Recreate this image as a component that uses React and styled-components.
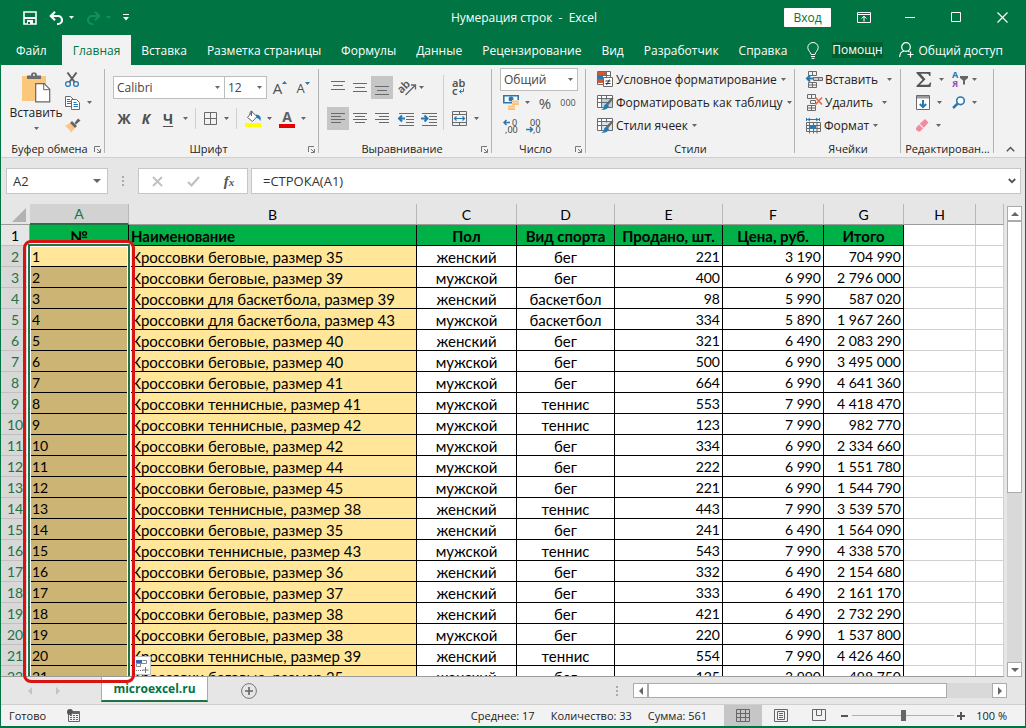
import styled, { createGlobalStyle, css } from "styled-components";

const tabs = [
  "Вставка",
  "Разметка страницы",
  "Формулы",
  "Данные",
  "Рецензирование",
  "Вид",
  "Разработчик",
  "Справка",
];

const columns = [
  { name: "A", width: 99, title: "№" },
  { name: "B", width: 288, title: "Наименование" },
  { name: "C", width: 100, title: "Пол" },
  { name: "D", width: 98, title: "Вид спорта" },
  { name: "E", width: 108, title: "Продано, шт." },
  { name: "F", width: 101, title: "Цена, руб." },
  { name: "G", width: 80, title: "Итого" },
];

const rows = [
  ["Кроссовки беговые, размер 35", "женский", "бег", "221", "3 190", "704 990"],
  ["Кроссовки беговые, размер 39", "мужской", "бег", "400", "6 990", "2 796 000"],
  ["Кроссовки для баскетбола, размер 39", "женский", "баскетбол", "98", "5 990", "587 020"],
  ["Кроссовки для баскетбола, размер 43", "мужской", "баскетбол", "334", "5 890", "1 967 260"],
  ["Кроссовки беговые, размер 40", "женский", "бег", "321", "6 490", "2 083 290"],
  ["Кроссовки беговые, размер 40", "мужской", "бег", "500", "6 990", "3 495 000"],
  ["Кроссовки беговые, размер 41", "мужской", "бег", "664", "6 990", "4 641 360"],
  ["Кроссовки теннисные, размер 41", "мужской", "теннис", "553", "7 990", "4 418 470"],
  ["Кроссовки теннисные, размер 42", "мужской", "теннис", "123", "7 990", "982 770"],
  ["Кроссовки беговые, размер 42", "мужской", "бег", "334", "6 990", "2 334 660"],
  ["Кроссовки беговые, размер 44", "мужской", "бег", "222", "6 990", "1 551 780"],
  ["Кроссовки беговые, размер 45", "мужской", "бег", "221", "6 990", "1 544 790"],
  ["Кроссовки теннисные, размер 38", "женский", "теннис", "443", "7 990", "3 539 570"],
  ["Кроссовки беговые, размер 35", "женский", "бег", "241", "6 490", "1 564 090"],
  ["Кроссовки теннисные, размер 43", "мужской", "теннис", "543", "7 990", "4 338 570"],
  ["Кроссовки беговые, размер 36", "женский", "бег", "332", "6 490", "2 154 680"],
  ["Кроссовки беговые, размер 37", "женский", "бег", "333", "6 490", "2 161 170"],
  ["Кроссовки беговые, размер 38", "женский", "бег", "421", "6 490", "2 732 290"],
  ["Кроссовки беговые, размер 38", "мужской", "бег", "220", "6 990", "1 537 800"],
  ["Кроссовки теннисные, размер 39", "женский", "теннис", "554", "7 990", "4 426 460"],
  ["Кроссовки беговые, размер 35", "женский", "бег", "125", "3 990", "498 750"],
];

const GREY = "#6a6a6a";
const BLUE = "#2878b0";

function Svg({ w = 16, h = 16, children }) {
  return (
    <svg width={w} height={h} viewBox={`0 0 ${w} ${h}`} fill="none" aria-hidden="true">
      {children}
    </svg>
  );
}

function Lines({ rows: list, color = GREY }) {
  return list.map(([x, y, w]) => <path key={y} d={`M${x} ${y}.5h${w}`} stroke={color} />);
}

const Caret = ({ color = "#666" }) => (
  <Svg w={5} h={3}>
    <path d="M0 0h5L2.5 3z" fill={color} />
  </Svg>
);

const SaveIcon = () => (
  <Svg w={14} h={14}>
    <path d="M1 1h12v12H1z" stroke="#fff" strokeWidth="1.6" />
    <path d="M1 7h12" stroke="#fff" strokeWidth="2" />
    <path d="M4 9h6v4H4z" fill="#fff" />
    <path d="M5 11h2v2H5z" fill="#007442" />
  </Svg>
);

const UndoIcon = ({ color = "#fff", flip }) => (
  <Svg w={15} h={14}>
    <g transform={flip ? "matrix(-1 0 0 1 15 0)" : undefined} stroke={color}>
      <path d="M2 5h7a4 4 0 0 1 0 8h-1" strokeWidth="2.2" />
      <path d="M6 0.8L1.8 5L6 9.2" strokeWidth="2.2" />
    </g>
  </Svg>
);

const CustomizeIcon = () => (
  <Svg w={6} h={7}>
    <path d="M0 .5h6" stroke="#fff" />
    <path d="M0 3h6L3 6.5z" fill="#fff" />
  </Svg>
);

const RibbonIcon = () => (
  <Svg w={14} h={11}>
    <path d="M.5.5h13v10H.5zM.5 2.5h13" stroke="#fff" />
    <path d="M7 9.5V4.5M4.5 6.5L7 4.2L9.5 6.5" stroke="#fff" />
  </Svg>
);

const BulbIcon = () => (
  <Svg w={12} h={17}>
    <path d="M4 12.5C4 10 .8 9 .8 5.5A5.2 5 0 0 1 11.2 5.5C11.2 9 8 10 8 12.5zM4 14.5h4M4.5 16.4h3" stroke="#fff" />
  </Svg>
);

const PersonIcon = () => (
  <Svg w={15} h={16}>
    <circle cx="7" cy="5" r="4.3" stroke="#fff" strokeWidth="1.2" />
    <path d="M.7 15C.7 11 3 9.5 5 9M9 9L10.5 9.8M11.5 9.5v6M8.5 12.5h6" stroke="#fff" strokeWidth="1.2" />
  </Svg>
);

const PasteIcon = () => (
  <Svg w={30} h={31}>
    <path d="M1 4h24v25H1z" fill="#fbc77b" />
    <path d="M6 7V3.5h4C10 1 11 .5 13 .5s3 .5 3 3h4V7z" fill="#6d6d6d" />
    <circle cx="13" cy="3" r="1" fill="#f2f2f2" />
    <path d="M14.7 11.7h8.5l5.5 5.5v12.6h-14z" fill="#fff" stroke="#666" strokeWidth="1.2" />
    <path d="M22.7 11.7v6h6" stroke="#666" />
  </Svg>
);

const CutIcon = () => (
  <Svg w={14} h={16}>
    <path d="M2.5 0.5L9.5 10M11.5 .5L4.5 10" stroke="#5c5c5c" strokeWidth="2" />
    <circle cx="3" cy="12" r="2.4" stroke={BLUE} strokeWidth="1.3" />
    <circle cx="11" cy="12" r="2.4" stroke={BLUE} strokeWidth="1.3" />
  </Svg>
);

const CopyIcon = () => (
  <Svg w={16} h={14}>
    <path d="M.5.5h5l2.5 2.5v7.5H.5z" fill="#fff" stroke={GREY} />
    <path d="M2 3.5h3M2 5.5h4M2 7.5h4" stroke={BLUE} />
    <path d="M6.5 3.5h5l3 3v7h-8z" fill="#fff" stroke={GREY} />
    <path d="M8.5 6.5h3M8.5 8.5h4.5M8.5 10.5h4.5" stroke={BLUE} />
  </Svg>
);

const BrushIcon = () => (
  <Svg w={16} h={15}>
    <path d="M0 8L5 5L10 10L6 14.5Q4 10.5 0 8z" fill="#fbc68b" />
    <path d="M5 5L7 3L12 8L10 10zM9.5 5L13 .5L15.5 2.5L11 6.5z" fill="#666" />
  </Svg>
);

const BorderIcon = () => (
  <Svg w={13} h={13}>
    <path d="M.5.5h12v12H.5zM6.5.5v12M.5 6.5h12" stroke={GREY} />
  </Svg>
);

const FillIcon = () => (
  <Svg w={17} h={17}>
    <path d="M6.5 2.5L2.5 7.5L7.5 11.5L12 6.5L6.5 1.5V6" stroke="#666" fill="#fff" />
    <path d="M5 5V2.2Q6 0 8 2.2" stroke="#666" />
    <path d="M11 4.5Q17 5 15.5 11Q14 8 11.5 8z" fill={BLUE} />
    <path d="M0 13h16v4H0z" fill="#ffff00" />
  </Svg>
);

const OrientIcon = () => (
  <Svg w={17} h={16}>
    <text x="-1" y="10" transform="rotate(-45 5 9)" fill="#555" fontSize="11" fontWeight="600" fontFamily="Noto Sans">
      ab
    </text>
    <path d="M5.5 15L15 5.5M11 5h4.5v4.5" stroke="#666" strokeWidth="1.3" />
  </Svg>
);

const WrapIcon = () => (
  <Svg w={14} h={17}>
    <text x="0" y="8" fill="#555" fontSize="11" fontWeight="600" fontFamily="Noto Sans">
      ab
    </text>
    <text x="0" y="16" fill="#555" fontSize="11" fontWeight="600" fontFamily="Noto Sans">
      c
    </text>
    <path d="M11.5 9.5v3H7.5M9.5 10.5l-2 2l2 2" stroke={BLUE} />
  </Svg>
);

const MergeIcon = () => (
  <Svg w={15} h={15}>
    <path d="M.5.5h14v14H.5zM.5 3.5h14M.5 11.5h14M7.5.5v3M7.5 11.5v3" stroke={GREY} />
    <path d="M2.5 7.5h10M4.5 5.5l-2 2l2 2M10.5 5.5l2 2l-2 2" stroke={BLUE} strokeWidth="1.2" />
  </Svg>
);

const IndentIcon = ({ right }) => (
  <Svg w={16} h={14}>
    <Lines rows={[[1, 1, 15], [8, 4, 8], [8, 7, 8], [8, 10, 8], [1, 13, 15]]} />
    <path d={right ? "M0 6.5h6M3.5 3.5l3 3l-3 3" : "M1 6.5h6M4 3.5l-3 3l3 3"} stroke={BLUE} strokeWidth="2" />
  </Svg>
);

const MoneyIcon = () => (
  <Svg w={17} h={17}>
    <path d="M.8 1.8h14.4v7H.8z" stroke={BLUE} strokeWidth="1.6" fill="#fff" />
    <circle cx="8" cy="5" r="2.5" fill={BLUE} />
    <path d="M9 6h8v10H4v-4h5z" fill="#f2f2f2" />
    <path d="M9 7.5h7M9 10h7M5 12.5h7M5 15h7" stroke="#fbc27e" strokeWidth="2" />
  </Svg>
);

const DecimalIcon = ({ less }) => (
  <Svg w={16} h={16}>
    <text x={less ? 4 : 9} y="8" fill="#444" fontSize="9" fontFamily="Noto Sans">
      {less ? "00" : "0"}
    </text>
    <text x={less ? 7 : 2} y="15" fill="#444" fontSize="9" fontFamily="Noto Sans">
      {less ? ",0" : ",00"}
    </text>
    <path d={less ? "M0 11.5h6M4 9l2.5 2.5L4 14" : "M1 4.5h6M3.5 2L1 4.5L3.5 7"} stroke={BLUE} strokeWidth="1.5" />
  </Svg>
);

const CondIcon = () => (
  <Svg w={17} h={17}>
    <path d="M.5.5h13v13H.5z" fill="#fff" stroke={GREY} />
    <path d="M1 1h8v3.5H1zM1 8h5v4H1z" fill="#d0593b" />
    <path d="M1 4.5h5V8H1z" fill={BLUE} />
    <path d="M9.5.5v6M.5 4.5h13" stroke={GREY} />
    <path d="M6.5 6.5h9v9h-9z" fill="#fff" stroke={GREY} />
    <path d="M8.5 10h5M8.5 12.5h5M12.5 8.5l-3 5.5" stroke="#333" />
  </Svg>
);

const StyleIcon = ({ filled }) => (
  <Svg w={17} h={17}>
    <path d="M.5 1.5h15v12H.5z" fill="#fff" stroke={GREY} />
    <path d="M4 5h11v8H4z" fill={filled ? "#b9d3e6" : "#d8e4ec"} />
    <path d="M.5 4.5h15M.5 8.5h10M4.5 1.5v12M9.5 1.5v4" stroke={GREY} />
    <path d="M15.5 3L16.5 4.5L11 11.5L9 9.5z" fill="#666" />
    <path d="M9.5 9.5L12 12Q11 16 4 16Q8 14 7 11.5z" fill={BLUE} />
  </Svg>
);

const InsertIcon = () => (
  <Svg w={17} h={17}>
    <path d="M2.5.5h8v4h-8zM6.5.5v4M2.5 11.5h8v5h-8zM6.5 11.5v5M2.5 14h8" stroke={GREY} />
    <path d="M7.5 6.5h9v3h-9zM12.5 6.5v3" stroke={GREY} fill="#ccc" />
    <path d="M1 7.5h7M4 4.5l-3 3l3 3" stroke={BLUE} strokeWidth="2" />
  </Svg>
);

const DeleteIcon = () => (
  <Svg w={17} h={17}>
    <path d="M1.5.5h8v4h-8zM5.5.5v4M1.5 11.5h8v5h-8zM5.5 11.5v5M1.5 14h8M4.5 6.5h5v3h-5z" stroke={GREY} />
    <path d="M9.5 3.5l6.5 7M16 3.5l-6.5 7" stroke="#e07050" strokeWidth="1.8" />
  </Svg>
);

const FormatIcon = () => (
  <Svg w={16} h={17}>
    <path d="M.5 1v3M13.5 1v3M1 2.5h12M4 1L2 2.5L4 4M10 1l2 1.5L10 4" stroke={BLUE} />
    <path d="M.5 5.5h14v9H.5zM.5 8.5h14M.5 11.5h14M3.5 5.5v11M11 5.5v11M7.5 5.5v11" stroke={GREY} />
    <path d="M4 8h6v4H4z" fill={BLUE} />
  </Svg>
);

const SumIcon = () => (
  <Svg w={16} h={15}>
    <path d="M.5 0h14v4h-1.2Q13 1.8 11 1.8H4.5L9.5 7.2L4 12.7h7.5Q13.5 12.7 14 10.5h1.2L14.5 15H.5v-1.2L6.5 7.7L.5 1.3z" fill="#555" />
  </Svg>
);

const SortIcon = () => (
  <Svg w={17} h={17}>
    <text x="0" y="7" fill={BLUE} fontSize="9" fontWeight="700" fontFamily="Noto Sans">
      А
    </text>
    <text x="0" y="16" fill="#9452b5" fontSize="9" fontWeight="700" fontFamily="Noto Sans">
      Я
    </text>
    <path d="M8 5h8v2l-3 2.5v4h-2v-4L8 7z" fill="#666" />
  </Svg>
);

const FillDownIcon = () => (
  <Svg w={14} h={15}>
    <path d="M.5.5h13v14H.5z" fill="#fff" stroke={GREY} />
    <path d="M1 1h12v2.5H1z" fill="#999" />
    <path d="M7 5v7M3.8 9L7 12.2L10.2 9" stroke={BLUE} strokeWidth="2" />
  </Svg>
);

const FindIcon = () => (
  <Svg w={14} h={13}>
    <circle cx="8.5" cy="4.8" r="3.8" fill="#fff" stroke={BLUE} strokeWidth="1.6" />
    <path d="M5.8 7.5L1 12" stroke={BLUE} strokeWidth="2.4" />
  </Svg>
);

const EraserIcon = () => (
  <Svg w={13} h={13}>
    <path d="M0 9L3 5.5L7 9.5L4 12.5H2L0 10.5z" fill="#f48a9f" />
    <path d="M3.8 4.8L9 0L12.5 3.5L7.8 8.8z" fill="#f48a9f" />
  </Svg>
);

const LauncherIcon = () => (
  <Svg w={7} h={7}>
    <path d="M.5 6V.5H6M3 3l3 3M6.5 3v3.5H3" stroke="#777" />
  </Svg>
);

const GridViewIcon = () => (
  <Svg w={14} h={13}>
    <path d="M.5.5h13v12H.5zM.5 4.5h13M.5 8.5h13M4.5.5v12M9.5.5v12" stroke="#666" />
  </Svg>
);

const PageViewIcon = () => (
  <Svg w={14} h={13}>
    <path d="M.5.5h13v12H.5zM3.5 2.5h7v8h-7zM5 4.5h4M5 6.5h4M5 8.5h4" stroke="#666" />
  </Svg>
);

const BreakViewIcon = () => (
  <Svg w={14} h={13}>
    <path d="M.5.5h13v11H.5zM4.5.5v6h5v-6" stroke="#666" />
  </Svg>
);

const MacroIcon = () => (
  <Svg w={13} h={13}>
    <path d="M1.5 5v7.5h11v-10H6" stroke="#666" />
    <path d="M6 4h6" stroke="#666" strokeWidth="2" />
    <path d="M3 6.5h8M3 8.5h8M3 10.5h8" stroke="#666" strokeDasharray="2 1" />
    <circle cx="3" cy="3" r="3" fill="#555" />
  </Svg>
);

const FillOptionsIcon = () => (
  <Svg w={15} h={17}>
    <path d="M0 0h15v17H0z" fill="#fff" />
    <path d="M1 3h6v3H1z" fill="#3767b0" />
    <path d="M7.5 3.5h4v3H1.5M1.5 6.5v3h4v-3" stroke="#888" />
    <path d="M1 13.5h7" stroke="#777" strokeDasharray="1 1" />
    <path d="M10.5 10v6M7.5 13h6" stroke="#777" />
  </Svg>
);

const Arrow = ({ dir, color = "#666" }) => {
  const d = { up: "M0 5L4 1L8 5z", down: "M0 1h8L4 5z", left: "M6 0v8L2 4z", right: "M2 0v8L6 4z" }[dir];
  const tall = dir === "left" || dir === "right";
  return (
    <Svg w={8} h={tall ? 8 : 6}>
      <path d={d} fill={color} />
    </Svg>
  );
};

function Pick({ label, value, width }) {
  return (
    <PickBox $width={width}>
      <select aria-label={label} defaultValue={value}>
        <option>{value}</option>
      </select>
      <Caret />
    </PickBox>
  );
}

function Group({ title, width, launcher, children }) {
  return (
    <GroupBox $width={width}>
      <GroupBody>{children}</GroupBody>
      <GroupLabel>
        <span>{title}</span>
        {launcher && (
          <IconButton aria-label={`${title}: параметры`}>
            <LauncherIcon />
          </IconButton>
        )}
      </GroupLabel>
    </GroupBox>
  );
}

function Command({ icon, children, gap = 2 }) {
  return (
    <CommandButton>
      {icon}
      <span>{children}</span>
      <CaretGap $gap={gap}>
        <Caret />
      </CaretGap>
    </CommandButton>
  );
}

function Ribbon() {
  return (
    <RibbonBar>
      <Group title="Буфер обмена" width={103} launcher>
        <PasteButton>
          <PasteIcon />
          <span>Вставить</span>
          <Caret />
        </PasteButton>
        <Stack>
          <IconButton aria-label="Вырезать"><CutIcon /></IconButton>
          <IconButton $gap={6} aria-label="Копировать"><CopyIcon /><Caret /></IconButton>
          <IconButton aria-label="Формат по образцу"><BrushIcon /></IconButton>
        </Stack>
      </Group>

      <Group title="Шрифт" width={213} launcher>
        <Tools>
          <ToolRow>
            <Pick label="Шрифт" value="Calibri" width={112} />
            <Pick label="Размер" value="12" width={43} />
            <LetterButton $w={26} $size={15} aria-label="Увеличить размер">
              A<sup><Svg w={5} h={3}><path d="M0 3h5L2.5 0z" fill={BLUE} /></Svg></sup>
            </LetterButton>
            <LetterButton $w={20} $size={13} aria-label="Уменьшить размер">
              A<sup><Caret color={BLUE} /></sup>
            </LetterButton>
          </ToolRow>
          <ToolRow>
            <LetterButton $w={22} $size={14}><b>Ж</b></LetterButton>
            <LetterButton $w={22} $size={14}><i>К</i></LetterButton>
            <LetterButton $w={22} $size={14}><u>Ч</u></LetterButton>
            <CaretButton $w={12} aria-label="Подчёркивание"><Caret /></CaretButton>
            <Divider $gap={4} />
            <IconButton $w={20} aria-label="Границы"><BorderIcon /></IconButton>
            <CaretButton $w={12} aria-label="Виды границ"><Caret /></CaretButton>
            <Divider $gap={4} />
            <IconButton $w={24} aria-label="Цвет заливки"><FillIcon /></IconButton>
            <CaretButton $w={8} aria-label="Выбор заливки"><Caret /></CaretButton>
            <ColorButton aria-label="Цвет текста">A</ColorButton>
            <CaretButton $w={8} aria-label="Выбор цвета"><Caret /></CaretButton>
          </ToolRow>
        </Tools>
      </Group>

      <Group title="Выравнивание" width={172} launcher>
        <Tools>
          <ToolRow>
            <IconButton $w={22} aria-label="По верхнему краю">
              <Svg w={14} h={14}><Lines rows={[[0, 0, 14], [2, 4, 10], [0, 8, 14]]} /></Svg>
            </IconButton>
            <IconButton $w={22} aria-label="По середине">
              <Svg w={14} h={14}><Lines rows={[[0, 2, 14], [2, 6, 10], [0, 10, 14]]} /></Svg>
            </IconButton>
            <IconButton $w={22} $on aria-label="По нижнему краю">
              <Svg w={14} h={14}><Lines rows={[[0, 5, 14], [2, 9, 10], [0, 13, 14]]} /></Svg>
            </IconButton>
            <OrientButton aria-label="Ориентация"><OrientIcon /><Caret /></OrientButton>
          </ToolRow>
          <ToolRow>
            <IconButton $w={22} $on aria-label="По левому краю">
              <Svg w={14} h={14}><Lines rows={[[0, 1, 14], [0, 4, 10], [0, 7, 14], [0, 10, 10]]} /></Svg>
            </IconButton>
            <IconButton $w={22} aria-label="По центру">
              <Svg w={14} h={14}><Lines rows={[[0, 1, 14], [2, 4, 10], [0, 7, 14], [2, 10, 10]]} /></Svg>
            </IconButton>
            <IconButton $w={22} aria-label="По правому краю">
              <Svg w={14} h={14}><Lines rows={[[0, 1, 14], [4, 4, 10], [0, 7, 14], [4, 10, 10]]} /></Svg>
            </IconButton>
            <IconButton $w={26} aria-label="Уменьшить отступ"><IndentIcon /></IconButton>
            <IconButton $w={20} aria-label="Увеличить отступ"><IndentIcon right /></IconButton>
          </ToolRow>
        </Tools>
        <TallDivider />
        <Tools $narrow>
          <ToolRow><IconButton $w={14} aria-label="Перенести текст"><WrapIcon /></IconButton></ToolRow>
          <ToolRow><IconButton $gap={7} aria-label="Объединить"><MergeIcon /><Caret /></IconButton></ToolRow>
        </Tools>
      </Group>

      <Group title="Число" width={93} launcher>
        <Stack $pad={8}>
          <Pick label="Формат числа" value="Общий" width={78} />
          <NumberRow>
            <IconButton $gap={5} aria-label="Денежный формат"><MoneyIcon /><Caret /></IconButton>
            <LetterButton $w={16} $size={15}>%</LetterButton>
            <LetterButton $w={16} $size={9}>000</LetterButton>
          </NumberRow>
          <NumberRow>
            <IconButton aria-label="Увеличить разрядность"><DecimalIcon /></IconButton>
            <IconButton aria-label="Уменьшить разрядность"><DecimalIcon less /></IconButton>
          </NumberRow>
        </Stack>
      </Group>

      <Group title="Стили" width={208}>
        <Stack $pad={11}>
          <Command icon={<CondIcon />}>Условное форматирование</Command>
          <Command icon={<StyleIcon filled />}>Форматировать как таблицу</Command>
          <Command icon={<StyleIcon />}>Стили ячеек</Command>
        </Stack>
      </Group>

      <Group title="Ячейки" width={105}>
        <Stack $pad={11}>
          <Command icon={<InsertIcon />} gap={7}>Вставить</Command>
          <Command icon={<DeleteIcon />} gap={7}>Удалить</Command>
          <Command icon={<FormatIcon />}>Формат</Command>
        </Stack>
      </Group>

      <Group title="Редактирован..." width={92}>
        <Stack $pad={15}>
          <NumberRow $flush>
            <IconButton $gap={7} $w={36} aria-label="Сумма"><SumIcon /><Caret /></IconButton>
            <IconButton $gap={3} aria-label="Сортировка"><SortIcon /><Caret /></IconButton>
          </NumberRow>
          <NumberRow $flush>
            <IconButton $gap={7} $w={36} aria-label="Заполнить"><FillDownIcon /><Caret /></IconButton>
            <IconButton $gap={6} aria-label="Найти"><FindIcon /><Caret /></IconButton>
          </NumberRow>
          <NumberRow $flush>
            <IconButton $gap={7} $w={36} aria-label="Очистить"><EraserIcon /><Caret /></IconButton>
          </NumberRow>
        </Stack>
      </Group>
      <RibbonTail>
        <IconButton aria-label="Свернуть ленту">
          <Svg w={9} h={6}><path d="M.8 5.2L4.5 1.5L8.2 5.2" stroke="#555" strokeWidth="1.5" /></Svg>
        </IconButton>
      </RibbonTail>
    </RibbonBar>
  );
}

function Sheet() {
  return (
    <SheetArea>
      <TableClip>
        <Table>
          <colgroup>
            <col width="29" />
            {columns.map((c) => <col key={c.name} width={c.width} />)}
            <col width="72" />
            <col />
          </colgroup>
          <thead>
            <tr>
              <Corner>
                <Svg w={14} h={14}><path d="M14 0v14H0z" fill="#b2b2b2" /></Svg>
              </Corner>
              {columns.map((c) => (
                <ColHead key={c.name} scope="col" $on={c.name === "A"}>{c.name}</ColHead>
              ))}
              <ColHead scope="col">H</ColHead>
              <ColHead />
            </tr>
          </thead>
          <tbody>
            <tr>
              <RowHead scope="row">1</RowHead>
              {columns.map((c) => (
                <TitleCell key={c.name} $left={c.name === "B"}>{c.title}</TitleCell>
              ))}
              <EmptyCell />
              <EmptyCell />
            </tr>
            {rows.map(([name, sex, sport, sold, price, total], i) => (
              <tr key={i}>
                <RowHead scope="row" $on>{i + 2}</RowHead>
                <NumberCell $align="left" $fill={i === 0 ? "#ffe699" : "#ccb474"}>{i + 1}</NumberCell>
                <Cell $fill="#ffe699">{name}</Cell>
                <Cell $align="center">{sex}</Cell>
                <Cell $align="center">{sport}</Cell>
                <NumberCell $align="right">{sold}</NumberCell>
                <NumberCell $align="right">{price}</NumberCell>
                <NumberCell $align="right">{total}</NumberCell>
                <EmptyCell />
                <EmptyCell />
              </tr>
            ))}
          </tbody>
        </Table>
        <Selection />
        <FillOptions aria-label="Параметры автозаполнения"><FillOptionsIcon /></FillOptions>
      </TableClip>
      <VScroll>
        <ScrollButton aria-label="Вверх"><Arrow dir="up" /></ScrollButton>
        <VThumb />
        <VTrack />
        <ScrollButton aria-label="Вниз"><Arrow dir="down" /></ScrollButton>
      </VScroll>
      <RedFrame />
    </SheetArea>
  );
}

export default function App() {
  return (
    <>
      <GlobalStyle />
      <Window>
        <TitleBar>
          <QuickAccess>
            <IconButton aria-label="Сохранить"><SaveIcon /></IconButton>
            <IconButton $gap={5} aria-label="Отменить"><UndoIcon /><Caret color="#fff" /></IconButton>
            <IconButton $gap={5} aria-label="Вернуть"><UndoIcon flip color="#12905c" /><Caret color="#12905c" /></IconButton>
            <IconButton aria-label="Настройка панели"><CustomizeIcon /></IconButton>
          </QuickAccess>
          <Title>Нумерация строк&nbsp; -&nbsp; Excel</Title>
          <WindowTools>
            <SignIn>Вход</SignIn>
            <WindowButton aria-label="Параметры ленты"><RibbonIcon /></WindowButton>
            <WindowButton aria-label="Свернуть">
              <Svg w={10} h={11}><path d="M0 5.5h10" stroke="#fff" /></Svg>
            </WindowButton>
            <WindowButton aria-label="Развернуть">
              <Svg w={11} h={11}><path d="M.5.5h9v9h-9z" stroke="#fff" /></Svg>
            </WindowButton>
            <WindowButton aria-label="Закрыть">
              <Svg w={11} h={11}><path d="M.5.5l10 10M10.5.5l-10 10" stroke="#fff" strokeWidth="1.2" /></Svg>
            </WindowButton>
          </WindowTools>
        </TitleBar>

        <TabBar>
          <FileTab>Файл</FileTab>
          <Tab $active>Главная</Tab>
          {tabs.map((t) => <Tab key={t}>{t}</Tab>)}
          <Helper>
            <BulbIcon />
            <span>Помощн</span>
          </Helper>
          <Share>
            <PersonIcon />
            Общий доступ
          </Share>
        </TabBar>

        <Ribbon />

        <FormulaRow>
          <NameBox>
            <input aria-label="Имя" defaultValue="A2" />
            <Arrow dir="down" />
          </NameBox>
          <Dots><i /><i /><i /></Dots>
          <FormulaTools>
            <button aria-label="Отмена">
              <Svg w={11} h={11}><path d="M1 1l9 9M10 1l-9 9" stroke="#c0c0c0" strokeWidth="1.8" /></Svg>
            </button>
            <button aria-label="Ввод">
              <Svg w={13} h={11}><path d="M1 6l3.5 3.5L12 1" stroke="#c0c0c0" strokeWidth="2.2" /></Svg>
            </button>
            <button aria-label="Вставить функцию"><em>f<small>x</small></em></button>
          </FormulaTools>
          <FormulaBox>
            <input aria-label="Строка формул" defaultValue="=СТРОКА(A1)" />
            <Svg w={8} h={6}><path d="M.8 1L4 4.2L7.2 1" stroke="#555" strokeWidth="1.8" /></Svg>
          </FormulaBox>
        </FormulaRow>

        <Sheet />

        <SheetBar>
          <SheetNav>
            <Arrow dir="left" color="#c4c4c4" />
            <Arrow dir="right" color="#c4c4c4" />
          </SheetNav>
          <SheetTab>microexcel.ru</SheetTab>
          <AddSheet aria-label="Новый лист">
            <Svg w={16} h={16}>
              <circle cx="8" cy="8" r="7.4" stroke="#777" />
              <path d="M8 4v8M4 8h8" stroke="#666" strokeWidth="1.6" />
            </Svg>
          </AddSheet>
          <Dots><i /><i /><i /></Dots>
          <HScroll>
            <ScrollButton aria-label="Влево"><Arrow dir="left" /></ScrollButton>
            <HThumb />
            <HTrack />
            <ScrollButton aria-label="Вправо"><Arrow dir="right" /></ScrollButton>
          </HScroll>
        </SheetBar>

        <StatusBar>
          <span>Готово</span>
          <MacroIcon />
          <Stats>
            <span>Среднее: 17</span>
            <span>Количество: 33</span>
            <span>Сумма: 561</span>
          </Stats>
          <Views>
            <ViewButton $on aria-label="Обычный"><GridViewIcon /></ViewButton>
            <ViewButton aria-label="Разметка страницы"><PageViewIcon /></ViewButton>
            <ViewButton aria-label="Страничный"><BreakViewIcon /></ViewButton>
          </Views>
          <Zoom>
            <IconButton aria-label="Уменьшить">
              <Svg w={7} h={8}><path d="M0 4h7" stroke="#555" strokeWidth="2" /></Svg>
            </IconButton>
            <input type="range" aria-label="Масштаб" min="0" max="200" defaultValue="100" />
            <IconButton aria-label="Увеличить">
              <Svg w={8} h={8}><path d="M0 4h8M4 0v8" stroke="#555" strokeWidth="2" /></Svg>
            </IconButton>
            <ZoomValue>100 %</ZoomValue>
          </Zoom>
        </StatusBar>
      </Window>
    </>
  );
}

const GlobalStyle = createGlobalStyle`
  * {
    box-sizing: border-box;
  }
  body {
    margin: 0;
    background: #e6e6e6;
    font-family: "Open Sans", "Noto Sans", sans-serif;
    font-size: 12px;
    color: #222;
  }
  button, input, select {
    font: inherit;
    color: inherit;
    padding: 0;
    margin: 0;
    border: none;
    background: none;
    outline: none;
  }
  svg {
    display: block;
    flex: none;
    overflow: visible;
  }
`;

const Window = styled.div`
  display: flex;
  flex-direction: column;
  height: 100vh;
  border: solid #007442;
  border-width: 0 1px 2px 1px;
  overflow: hidden;
`;

const TitleBar = styled.header`
  display: flex;
  align-items: center;
  height: 35px;
  flex: none;
  background: #007442;
  color: #fff;
`;

const QuickAccess = styled.div`
  display: flex;
  align-items: center;
  flex: 1;
  gap: 12px;
  padding-left: 22px;
`;

const Title = styled.div`
  white-space: nowrap;
`;

const WindowTools = styled.div`
  display: flex;
  flex: 1;
  align-items: center;
  justify-content: flex-end;
`;

const SignIn = styled.button`
  width: 47px;
  height: 19px;
  margin-right: 10px;
  background: #fff;
  color: #007442;
  border-radius: 1px;
`;

const WindowButton = styled.button`
  display: flex;
  justify-content: center;
  width: 46px;
`;

const TabBar = styled.nav`
  display: flex;
  height: 30px;
  flex: none;
  background: #007442;
  color: #fff;
  padding-left: 3px;
`;

const Tab = styled.button`
  padding: 0 10px;
  white-space: nowrap;
  ${(p) =>
    p.$active &&
    css`
      padding: 0 11px;
      background: #f2f2f2;
      color: #007442;
    `}
`;

const FileTab = styled(Tab)`
  margin: 0 5px 0 2px;
`;

const Helper = styled.button`
  display: flex;
  align-items: center;
  gap: 13px;
  margin-left: 10px;

  span {
    background: #005f2f;
    line-height: 16px;
  }
`;

const Share = styled.button`
  display: flex;
  align-items: center;
  gap: 4px;
  margin-left: auto;
  padding-right: 22px;
  white-space: nowrap;
`;

const RibbonBar = styled.section`
  display: flex;
  flex: none;
  background: #f2f2f2;
  border-bottom: 1px solid #cfcfcf;
`;

const GroupBox = styled.div`
  display: flex;
  flex-direction: column;
  width: ${(p) => p.$width + 1}px;
  flex: none;
  position: relative;

  &::after {
    content: "";
    position: absolute;
    right: 0;
    top: 4px;
    bottom: 4px;
    width: 1px;
    background: #b4b4b4;
  }
`;

const GroupBody = styled.div`
  display: flex;
  height: 73px;
  padding-top: 3px;
`;

const GroupLabel = styled.div`
  display: flex;
  align-items: center;
  height: 19px;
  padding: 3px 4px 0;
  font-size: 11px;
  line-height: 16px;
  white-space: nowrap;

  span {
    flex: 1;
    text-align: center;
  }
`;

const IconButton = styled.button`
  display: flex;
  align-items: center;
  justify-content: ${(p) => (p.$gap ? "flex-start" : "center")};
  gap: ${(p) => p.$gap || 0}px;
  width: ${(p) => (p.$w ? `${p.$w}px` : "auto")};
  ${(p) => p.$on && "background: #c6c6c6; align-self: stretch;"}
`;

const OrientButton = styled(IconButton)`
  gap: 2px;
  margin-left: 7px;
`;

const CaretButton = styled.button`
  display: flex;
  justify-content: center;
  width: ${(p) => p.$w}px;
`;

const LetterButton = styled.button`
  display: flex;
  align-items: center;
  justify-content: center;
  width: ${(p) => p.$w}px;
  font-size: ${(p) => p.$size}px;
  font-weight: 500;
  color: #505050;

  i {
    font-weight: 700;
  }
  u {
    font-weight: 700;
    text-underline-offset: 2px;
  }
  sup {
    align-self: flex-start;
    margin-top: 3px;
    line-height: 1;
  }
`;

const ColorButton = styled.button`
  width: 16px;
  margin: 0 4px 0 6px;
  border-bottom: 4px solid #e60000;
  font-size: 14px;
  line-height: 14px;
  font-weight: 700;
  color: #606060;
`;

const Divider = styled.span`
  width: 1px;
  height: 21px;
  margin: 0 ${(p) => p.$gap}px;
  background: #d0d0d0;
`;

const TallDivider = styled.span`
  width: 1px;
  margin: 7px 8px 8px 4px;
  background: #d0d0d0;
`;

const Stack = styled.div`
  display: flex;
  flex-direction: column;
  padding-left: ${(p) => p.$pad || 0}px;

  > * {
    height: 23px;
  }
`;

const Tools = styled.div`
  display: flex;
  flex-direction: column;
  gap: 8px;
  padding: 8px 0 0 ${(p) => (p.$narrow ? 0 : 8)}px;
`;

const ToolRow = styled.div`
  display: flex;
  align-items: center;
  height: 23px;
`;

const NumberRow = styled.div`
  display: flex;
  align-items: center;
  gap: ${(p) => (p.$flush ? 0 : 7)}px;
  padding-left: ${(p) => (p.$flush ? 0 : 3)}px;
`;

const PasteButton = styled.button`
  display: flex;
  flex-direction: column;
  align-items: center;
  width: 54px;
  margin: 4px 0 0 8px;

  span {
    line-height: 20px;
    margin-bottom: 4px;
  }
  & + div {
    margin-left: 2px;
    align-items: flex-start;
  }
`;

const PickBox = styled.div`
  display: flex;
  align-items: center;
  width: ${(p) => p.$width}px;
  height: 23px;
  padding: 0 4px 0 3px;
  background: #fff;
  border: 1px solid #bdbdbd;
  color: #444;

  & + & {
    margin-left: -1px;
  }
  select {
    appearance: none;
    flex: 1;
    min-width: 0;
  }
`;

const CommandButton = styled.button`
  display: flex;
  align-items: center;
  gap: 2px;
  white-space: nowrap;
`;

const CaretGap = styled.i`
  margin-left: ${(p) => p.$gap}px;
`;

const RibbonTail = styled.div`
  display: flex;
  flex: 1;
  align-items: flex-end;
  justify-content: flex-end;
  padding: 0 10px 5px 0;
`;

const FormulaRow = styled.div`
  display: flex;
  flex: none;
  align-items: center;
  height: 46px;
  padding: 0 4px 0 5px;
  font-size: 13px;
  color: #333;
`;

const NameBox = styled.div`
  display: flex;
  align-items: center;
  width: 102px;
  height: 26px;
  padding: 0 6px;
  background: #fff;
  border: 1px solid #c6c6c6;

  input {
    flex: 1;
    min-width: 0;
  }
`;

const Dots = styled.span`
  display: flex;
  flex-direction: column;
  align-items: center;
  gap: 2px;
  width: 30px;

  i {
    width: 2px;
    height: 2px;
    background: #aaa;
  }
`;

const FormulaTools = styled.div`
  display: flex;
  width: 110px;
  height: 26px;
  margin-right: 3px;
  background: #fff;
  border: 1px solid #c6c6c6;

  button {
    display: flex;
    flex: 1;
    align-items: center;
    justify-content: center;
  }
  em {
    font-family: "Liberation Serif", serif;
    font-size: 15px;
    font-weight: 700;
    color: #555;
  }
  small {
    font-size: 11px;
  }
`;

const FormulaBox = styled.div`
  display: flex;
  flex: 1;
  align-items: center;
  height: 26px;
  padding: 0 4px 0 11px;
  background: #fff;
  border: 1px solid #c6c6c6;

  input {
    flex: 1;
  }
`;

const SheetArea = styled.main`
  position: relative;
  z-index: 1;
  display: flex;
  flex: 1;
  min-height: 0;
`;

const TableClip = styled.div`
  position: relative;
  flex: 1;
  min-width: 0;
  overflow: hidden;
  border-bottom: 1px solid #9b9b9b;
`;

const Table = styled.table`
  width: 100%;
  table-layout: fixed;
  border-collapse: separate;
  border-spacing: 0;
  font-family: Lato, "Noto Sans", sans-serif;
  font-size: 15px;
  line-height: 18px;
  color: #000;

  tr {
    height: 21px;
  }
  th,
  td {
    height: 21px;
    padding: 1px 2px 0;
    white-space: nowrap;
    overflow: hidden;
  }
`;

const Corner = styled.td`
  border-bottom: 1px solid #9b9b9b;

  svg {
    margin-left: auto;
    margin-right: 2px;
  }
`;

const ColHead = styled.th`
  font-size: 14px;
  font-weight: 400;
  border-right: 1px solid #b8b8b8;
  border-bottom: 1px solid #9b9b9b;
  ${(p) =>
    p.$on &&
    css`
      background: #d2d2d2;
      color: #217346;
      border-bottom: 2px solid #217346;
    `}
`;

const RowHead = styled.th`
  font-size: 14px;
  font-weight: 400;
  text-align: center;
  border-right: 1px solid #9b9b9b;
  border-bottom: 1px solid #c0c0c0;
  ${(p) =>
    p.$on &&
    css`
      background: #d8d8d8;
      color: #217346;
    `}
`;

const Cell = styled.td`
  text-align: ${(p) => p.$align || "left"};
  background: ${(p) => p.$fill || "#fff"};
  border-right: 1px solid #000;
  border-bottom: 1px solid #000;
`;

const NumberCell = styled(Cell)`
  font-size: 14px;
`;

const TitleCell = styled.td`
  text-align: ${(p) => (p.$left ? "left" : "center")};
  font-weight: 700;
  background: #00b148;
  border-right: 1px solid #000;
  border-bottom: 1px solid #000;
`;

const EmptyCell = styled.td`
  background: #fff;
  border-right: 1px solid #d0d0d0;
  border-bottom: 1px solid #d0d0d0;
`;

const Selection = styled.div`
  position: absolute;
  left: 27px;
  top: 40px;
  width: 102px;
  bottom: -4px;
  border: 2px solid #217346;
  box-shadow: inset 0 0 0 1px #fff, 0 0 0 1px #fff;
`;

const FillOptions = styled.button`
  position: absolute;
  left: 133px;
  bottom: 1px;
  border: 1px solid #c0c0c0;
`;

const RedFrame = styled.div`
  position: absolute;
  left: 22px;
  top: 36px;
  width: 112px;
  bottom: -6px;
  border: 3px solid #d91212;
  border-radius: 8px;
  pointer-events: none;
`;

const VScroll = styled.div`
  display: flex;
  flex-direction: column;
  width: 15px;
  margin: 2px 3px 0 3px;
`;

const ScrollButton = styled.button`
  display: flex;
  align-items: center;
  justify-content: center;
  width: 15px;
  height: 15px;
  flex: none;
  background: #fff;
  border: 1px solid #ababab;
`;

const VThumb = styled.div`
  flex: 272;
  background: #fff;
  border: 1px solid #ababab;
`;

const VTrack = styled.div`
  flex: 170;
  background: #d9d9d9;
`;

const SheetBar = styled.div`
  display: flex;
  flex: none;
  height: 28px;
  align-items: center;
  border-bottom: 1px solid #cfcfcf;
`;

const SheetNav = styled.div`
  display: flex;
  gap: 20px;
  width: 100px;
  padding-left: 25px;
`;

const SheetTab = styled.button`
  align-self: flex-start;
  width: 107px;
  height: 25px;
  background: #fff;
  color: #007442;
  font-weight: 700;
  border: solid #ababab;
  border-width: 0 1px;
  border-bottom: 2px solid #217346;
`;

const AddSheet = styled.button`
  margin: 0 auto 0 33px;
`;

const HScroll = styled.div`
  display: flex;
  width: 374px;
  margin: 0 18px 0 1px;
`;

const HThumb = styled.div`
  flex: 300;
  background: #fff;
  border: 1px solid #ababab;
`;

const HTrack = styled.div`
  flex: 45;
  background: #d9d9d9;
`;

const StatusBar = styled.footer`
  display: flex;
  flex: none;
  align-items: center;
  gap: 17px;
  height: 21px;
  padding: 0 18px 0 8px;
  background: #f2f2f2;
  font-size: 11px;
  white-space: nowrap;

  > svg {
    margin-left: 4px;
  }
`;

const Stats = styled.div`
  display: flex;
  gap: 16px;
  margin-left: auto;
`;

const Views = styled.div`
  display: flex;
  align-self: stretch;
`;

const ViewButton = styled.button`
  display: flex;
  align-items: center;
  justify-content: center;
  width: 38px;
  background: ${(p) => (p.$on ? "#c6c6c6" : "none")};
`;

const Zoom = styled.div`
  display: flex;
  align-items: center;
  margin-left: -14px;

  input {
    appearance: none;
    width: 102px;
    height: 12px;
    margin: 0 3px 0 4px;
    background: linear-gradient(#b0b0b0, #b0b0b0) center / 100% 1px no-repeat;
  }
  input::-webkit-slider-thumb {
    appearance: none;
    width: 5px;
    height: 11px;
    background: #666;
  }
`;

const ZoomValue = styled.span`
  margin-left: 11px;
`;
